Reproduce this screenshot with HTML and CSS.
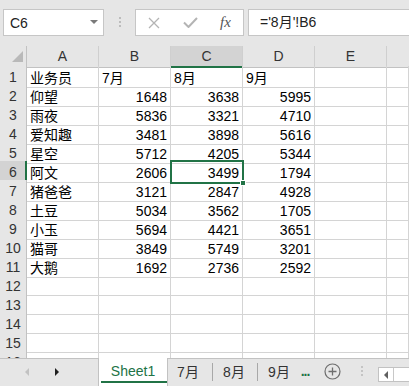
FILE: index.html
```html
<!DOCTYPE html>
<html lang="zh-CN">
<head>
    <meta charset="UTF-8">
    <title>Sheet1</title>
    <link rel="stylesheet" href="styles.css">
</head>
<body>
    <div class="toolbar">
        <div class="namebox"><span>C6</span><span class="caret"></span></div>
        <div class="grip">
            <svg width="3" height="11" viewBox="0 0 3 11"><rect x="0" y="0" width="2" height="2" fill="#bcbcbc"/><rect x="0" y="4" width="2" height="2" fill="#bcbcbc"/><rect x="0" y="8" width="2" height="2" fill="#bcbcbc"/></svg>
        </div>
        <div class="fxbox">
            <span class="fxbtn"><svg width="12" height="12" viewBox="0 0 12 12"><path d="M1 1 L11 11 M11 1 L1 11" stroke="#b4b4b4" stroke-width="1.3" fill="none"/></svg></span>
            <span class="fxbtn"><svg width="15" height="11" viewBox="0 0 15 11"><path d="M1 5.5 L5.5 10 L14 1" stroke="#b4b4b4" stroke-width="2" fill="none"/></svg></span>
            <span class="fxbtn fx">fx</span>
        </div>
        <div class="formula">='8月'!B6</div>
    </div>

    <div class="sheet">
        <div class="row head">
            <div class="corner"><svg width="26" height="19" viewBox="0 0 26 19"><polygon points="23,5 23,16 12,16" fill="#b9b9b9"/></svg></div>
            <div class="ch">A</div><div class="ch">B</div><div class="ch sel">C</div><div class="ch">D</div><div class="ch">E</div><div class="ch last"></div>
        </div>
        <div class="row">
            <div class="rh">1</div><div class="c">业务员</div><div class="c">7月</div><div class="c">8月</div><div class="c">9月</div><div class="c"></div><div class="c"></div>
        </div>
        <div class="row">
            <div class="rh">2</div><div class="c">仰望</div><div class="c n">1648</div><div class="c n">3638</div><div class="c n">5995</div><div class="c"></div><div class="c"></div>
        </div>
        <div class="row">
            <div class="rh">3</div><div class="c">雨夜</div><div class="c n">5836</div><div class="c n">3321</div><div class="c n">4710</div><div class="c"></div><div class="c"></div>
        </div>
        <div class="row">
            <div class="rh">4</div><div class="c">爱知趣</div><div class="c n">3481</div><div class="c n">3898</div><div class="c n">5616</div><div class="c"></div><div class="c"></div>
        </div>
        <div class="row">
            <div class="rh">5</div><div class="c">星空</div><div class="c n">5712</div><div class="c n">4205</div><div class="c n">5344</div><div class="c"></div><div class="c"></div>
        </div>
        <div class="row">
            <div class="rh sel">6</div><div class="c">阿文</div><div class="c n">2606</div><div class="c n active">3499<span class="handle"></span></div><div class="c n">1794</div><div class="c"></div><div class="c"></div>
        </div>
        <div class="row">
            <div class="rh">7</div><div class="c">猪爸爸</div><div class="c n">3121</div><div class="c n">2847</div><div class="c n">4928</div><div class="c"></div><div class="c"></div>
        </div>
        <div class="row">
            <div class="rh">8</div><div class="c">土豆</div><div class="c n">5034</div><div class="c n">3562</div><div class="c n">1705</div><div class="c"></div><div class="c"></div>
        </div>
        <div class="row">
            <div class="rh">9</div><div class="c">小玉</div><div class="c n">5694</div><div class="c n">4421</div><div class="c n">3651</div><div class="c"></div><div class="c"></div>
        </div>
        <div class="row">
            <div class="rh">10</div><div class="c">猫哥</div><div class="c n">3849</div><div class="c n">5749</div><div class="c n">3201</div><div class="c"></div><div class="c"></div>
        </div>
        <div class="row">
            <div class="rh">11</div><div class="c">大鹅</div><div class="c n">1692</div><div class="c n">2736</div><div class="c n">2592</div><div class="c"></div><div class="c"></div>
        </div>
        <div class="row">
            <div class="rh">12</div><div class="c"></div><div class="c"></div><div class="c"></div><div class="c"></div><div class="c"></div><div class="c"></div>
        </div>
        <div class="row">
            <div class="rh">13</div><div class="c"></div><div class="c"></div><div class="c"></div><div class="c"></div><div class="c"></div><div class="c"></div>
        </div>
        <div class="row">
            <div class="rh">14</div><div class="c"></div><div class="c"></div><div class="c"></div><div class="c"></div><div class="c"></div><div class="c"></div>
        </div>
        <div class="row">
            <div class="rh">15</div><div class="c"></div><div class="c"></div><div class="c"></div><div class="c"></div><div class="c"></div><div class="c"></div>
        </div>
        <div class="row">
            <div class="rh">16</div><div class="c"></div><div class="c"></div><div class="c"></div><div class="c"></div><div class="c"></div><div class="c"></div>
        </div>
    </div>

    <div class="tabs">
        <div class="nav">
            <svg width="98" height="27" viewBox="0 0 98 27"><polygon points="29,9 29,17 25,13" fill="#c2c2c2"/><polygon points="55,9 55,17 59,13" fill="#1f1f1f"/></svg>
        </div>
        <div class="tab current">Sheet1</div>
        <div class="tab t7">7月</div>
        <span class="sep"></span>
        <div class="tab t8">8月</div>
        <span class="sep"></span>
        <div class="tab t9">9月</div>
        <div class="more">...</div>
        <div class="add">
            <svg width="17" height="17" viewBox="0 0 17 17"><circle cx="8.5" cy="8.5" r="7.5" stroke="#6e6e6e" stroke-width="1.2" fill="none"/><path d="M8.5 4.5 V12.5 M4.5 8.5 H12.5" stroke="#6e6e6e" stroke-width="1.3"/></svg>
        </div>
        <div class="tabgrip">
            <svg width="3" height="11" viewBox="0 0 3 11"><rect x="0" y="0" width="2" height="2" fill="#c4c4c4"/><rect x="0" y="4" width="2" height="2" fill="#c4c4c4"/><rect x="0" y="8" width="2" height="2" fill="#c4c4c4"/></svg>
        </div>
        <div class="hscroll">
            <span class="arrow"><svg width="6" height="8" viewBox="0 0 6 8"><polygon points="5,0 5,8 1,4" fill="#606060"/></svg></span>
            <span class="thumb"></span>
        </div>
    </div>
</body>
</html>
```

FILE: styles.css
```css
* {
    box-sizing: border-box;
}
body {
    margin: 0;
    width: 409px;
    height: 386px;
    overflow: hidden;
    font-family: "Liberation Sans", "Noto Sans CJK SC", sans-serif;
    font-size: 14px;
    color: #000;
    background-color: #fff;
}
.toolbar {
    height: 46px;
    background-color: #e6e6e6;
    display: flex;
    align-items: flex-start;
    padding: 9px 0 0 3px;
}
.namebox {
    width: 101px;
    height: 27px;
    background-color: #fff;
    border: 1px solid #c6c6c6;
    display: flex;
    align-items: center;
    justify-content: space-between;
    padding: 0 5px 0 6px;
    color: #222;
}
.caret {
    width: 0;
    height: 0;
    border-left: 4px solid transparent;
    border-right: 4px solid transparent;
    border-top: 4px solid #7a7a7a;
    margin-bottom: 2px;
}
.grip {
    width: 31px;
    height: 27px;
    display: flex;
    align-items: center;
    justify-content: center;
    padding-left: 2px;
}
.fxbox {
    width: 109px;
    height: 27px;
    background-color: #fff;
    border: 1px solid #c6c6c6;
    display: flex;
    align-items: center;
}
.fxbtn {
    width: 36px;
    display: flex;
    justify-content: center;
    align-items: center;
}
.fxbtn.fx {
    width: 35px;
    font-family: "Liberation Serif", serif;
    font-style: italic;
    font-size: 15px;
    color: #555;
}
.formula {
    flex: 1;
    margin-left: 4px;
    height: 27px;
    background-color: #fff;
    border: 1px solid #c6c6c6;
    border-right: none;
    padding-left: 11px;
    line-height: 25px;
    color: #222;
}

.sheet {
    height: 312px;
    overflow: hidden;
}
.row {
    display: grid;
    grid-template-columns: 27px 72px 72px 72px 72px 72px 1fr;
    height: 19px;
}
.row.head {
    height: 20px;
}
.corner,
.ch {
    background-color: #e6e6e6;
    border-right: 1px solid #cfcfcf;
    border-bottom: 1px solid #c2c2c2;
    text-align: center;
    line-height: 19px;
    padding-top: 1px;
    color: #333;
}
.corner {
    border-right-color: #c2c2c2;
    padding-top: 0;
}
.corner svg {
    display: block;
}
.ch.sel {
    background-color: #d3d3d3;
    border-bottom: 2px solid #217346;
}
.ch.last {
    border-right: none;
}
.rh {
    background-color: #e6e6e6;
    border-right: 1px solid #c2c2c2;
    border-bottom: 1px solid #d4d4d4;
    text-align: center;
    line-height: 18px;
    padding-top: 2px;
    color: #333;
}
.rh.sel {
    background-color: #d3d3d3;
    border-right: 2px solid #217346;
    padding-left: 1px;
}
.c {
    border-right: 1px solid #d4d4d4;
    border-bottom: 1px solid #d4d4d4;
    padding: 3px 3px 0 3px;
    line-height: 18px;
    white-space: nowrap;
}
.c.n {
    text-align: right;
}
.c.active {
    position: relative;
    z-index: 1;
    outline: 2px solid #217346;
    outline-offset: -1px;
}
.handle {
    position: absolute;
    right: -4px;
    bottom: -4px;
    width: 6px;
    height: 6px;
    background-color: #217346;
    border: 1px solid #fff;
}

.tabs {
    height: 28px;
    background-color: #e6e6e6;
    border-top: 1px solid #c2c2c2;
    display: flex;
    align-items: stretch;
}
.nav {
    width: 98px;
}
.nav svg {
    display: block;
}
.tab {
    display: flex;
    align-items: center;
    justify-content: center;
    padding-bottom: 3px;
    color: #333;
}
.tab.current {
    width: 70px;
    height: 28px;
    margin-top: -1px;
    background-color: #fff;
    border-left: 1px solid #c2c2c2;
    border-right: 1px solid #c2c2c2;
    color: #217346;
    position: relative;
    padding-top: 1px;
}
.tab.current::after {
    content: "";
    position: absolute;
    left: 2px;
    right: 0;
    bottom: 3px;
    height: 2px;
    background-color: #217346;
}
.tab.t7 {
    width: 44px;
    padding-right: 4px;
}
.tab.t8 {
    width: 44px;
    padding-right: 2px;
}
.tab.t9 {
    width: 40px;
    padding-left: 2px;
}
.sep {
    width: 1px;
    height: 18px;
    align-self: center;
    margin-bottom: 2px;
    background-color: #a8a8a8;
}
.more {
    width: 14px;
    display: flex;
    align-items: center;
    justify-content: center;
    padding-bottom: 3px;
    color: #217346;
    font-weight: bold;
    letter-spacing: -1px;
}
.add {
    margin-left: 12px;
    display: flex;
    align-items: center;
    padding-bottom: 2px;
}
.tabgrip {
    margin-left: 20px;
    display: flex;
    align-items: center;
    padding-bottom: 2px;
}
.hscroll {
    flex: 1;
    margin: 8px 0 4px 14px;
    background-color: #fff;
    border: 1px solid #c2c2c2;
    border-right: none;
    display: flex;
    align-items: stretch;
}
.hscroll .arrow {
    width: 15px;
    display: flex;
    align-items: center;
    justify-content: center;
    border-right: 1px solid #c8c8c8;
}
.hscroll .thumb {
    flex: 1;
}
```
